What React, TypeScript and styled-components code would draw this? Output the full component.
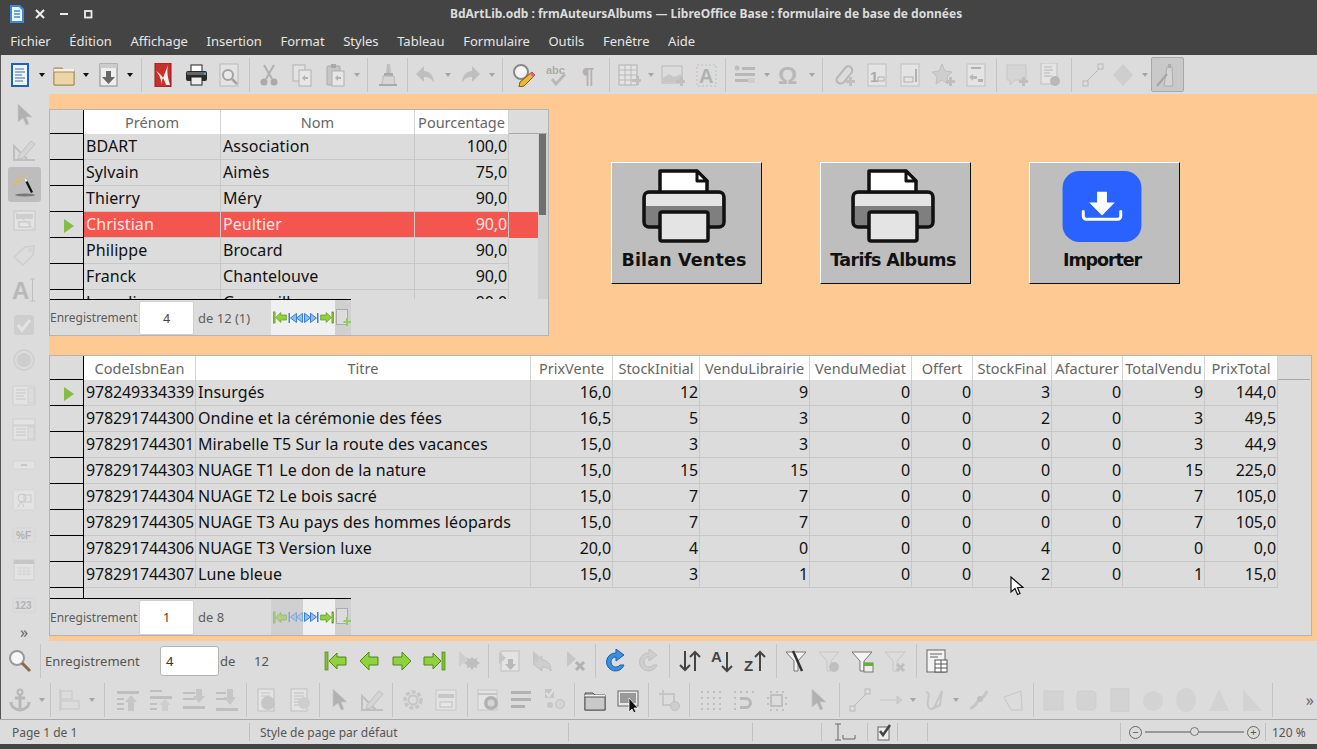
import * as React from 'react';
import styled, { createGlobalStyle } from 'styled-components';

const GlobalStyle = createGlobalStyle`
  html, body { margin: 0; padding: 0; height: 100%; overflow: hidden; }
  body { font-family: "Noto Sans", "Open Sans", sans-serif; background: #444; }
`;

const icons: Record<string, React.ReactNode> = {
  newDoc: <><rect x="3" y="0" width="18" height="24" fill="#1f63b8" /><rect x="5" y="2" width="14" height="20" fill="#eef4fb" /><path d="M7 6h9M7 9h10M7 12h7M7 15h10M7 18h8" stroke="#7f9cc0" strokeWidth="1.5" /></>,
  open: <><path d="M2 5h8l2 2h10v15H2z" fill="#d9b97f" stroke="#a98a55" /><rect x="2" y="6" width="20" height="3" fill="#f6f1e4" /><path d="M2 9h20v13H2z" fill="#ecd6a8" stroke="#a98a55" /></>,
  importDoc: <><rect x="4" y="1" width="17" height="22" fill="#eee" stroke="#888" /><rect x="4" y="1" width="17" height="4" fill="#ccc" /><path d="M10 8h5v6h4l-6.500 7-6.500-7h4z" fill="#666" /></>,
  pdf: <><rect x="4" y="0" width="16" height="24" fill="#c9302c" stroke="#8c1f1c" /><path d="M17 2c-1 6-1 10 2 20H15C13 15 10 11 5 8c4 5 6 9 5 15 1-8 5-14 7-21z" fill="#f4f4f4" /></>,
  print: <><rect x="7" y="2" width="11" height="7" fill="#fff" stroke="#222" /><rect x="2" y="8" width="21" height="10" rx="2" fill="#2b2b2b" /><rect x="3" y="9" width="19" height="3" fill="#666" /><rect x="7" y="14" width="11" height="8" fill="#eee" stroke="#222" /><rect x="20" y="10" width="2" height="2" fill="#35a4e0" /></>,
  preview: <><rect x="3" y="1" width="18" height="22" fill="#eee" stroke="#888" /><circle cx="11" cy="12" r="5" fill="#fff" stroke="#555" strokeWidth="2" /><path d="M15 16l5 5" stroke="#555" strokeWidth="2.500" /></>,
  cut: <><path d="M7 2l8 14M17 2L9 16" stroke="#777" strokeWidth="2" /><circle cx="7" cy="19" r="3.500" fill="#666" /><circle cx="17" cy="19" r="3.500" fill="#666" /></>,
  copy: <><rect x="3" y="2" width="12" height="16" fill="#eee" stroke="#777" /><rect x="9" y="7" width="12" height="16" fill="#f5f5f5" stroke="#777" /><path d="M12 15l3-3v2h3v2h-3v2z" fill="#777" /></>,
  paste: <><rect x="4" y="3" width="13" height="19" rx="1" fill="#aaa" stroke="#666" /><rect x="8" y="1" width="5" height="4" fill="#666" /><rect x="9" y="8" width="12" height="15" fill="#f5f5f5" stroke="#777" /><path d="M12 15l3-3v2h3v2h-3v2z" fill="#777" /></>,
  clone: <><path d="M11 1h3l1 10h-5z" fill="#999" /><rect x="8" y="10" width="9" height="3" fill="#666" /><path d="M7 13h11l1 9H5c2-3 2-6 2-9z" fill="#ccc" stroke="#888" /><path d="M3 21h18v2H3z" fill="#666" /></>,
  undo: <path d="M10 3L2 11l8 8v-5c5 0 8 2 10 6 0-7-4-12-10-12z" fill="#999" />,
  redo: <path d="M14 3l8 8-8 8v-5c-5 0-8 2-10 6 0-7 4-12 10-12z" fill="#999" />,
  find: <><circle cx="9" cy="9" r="7" fill="#f4f4f4" stroke="#888" strokeWidth="2" /><path d="M20 9l3 3-11 11-5 1 1-5z" fill="#f1b633" stroke="#7a5a16" /><path d="M20 9l3 3-2 2-3-3z" fill="#e85c8a" /></>,
  spell: <><text x="1" y="11" fontFamily="Liberation Sans" fontWeight="700" fontSize="11" fill="#666">abc</text><path d="M7 16l4 5 9-10" stroke="#888" strokeWidth="3" fill="none" /></>,
  para: <text x="4" y="20" fontFamily="Liberation Sans" fontWeight="700" fontSize="22" fill="#777">¶</text>,
  table: <><rect x="2" y="2" width="18" height="20" fill="#eee" stroke="#777" /><path d="M2 7h18M2 12h18M2 17h18M8 2v20M14 2v20" stroke="#888" /><path d="M15 16h4v-3h3v3h2v3h-2v3h-3v-3h-4z" fill="#999" /></>,
  image: <><rect x="1" y="3" width="20" height="17" fill="#ddd" stroke="#888" /><path d="M2 15l6-4 5 3 7-3v8H2z" fill="#aaa" /><path d="M15 17h4v-3h3v3h2v3h-2v3h-3v-3h-4z" fill="#999" /></>,
  textbox: <><rect x="3" y="2" width="19" height="21" fill="none" stroke="#999" strokeDasharray="2 2" /><text x="5" y="20" fontFamily="Liberation Sans" fontWeight="700" fontSize="20" fill="#777">A</text></>,
  lists: <><circle cx="4" cy="5" r="2.500" fill="#999" /><path d="M9 4h13v3H9zM2 10h20v3H2zM2 16h14v3H2z" fill="#888" /><rect x="15" y="15" width="7" height="5" fill="#bbb" /></>,
  omega: <text x="0" y="21" fontFamily="Liberation Sans" fontWeight="700" fontSize="24" fill="#888">Ω</text>,
  link: <><path d="M5 15l9-11c4-2 7 1 6 5l-8 10c-3 3-9 1-7-4z" fill="none" stroke="#888" strokeWidth="2" /><path d="M14 17h3v-3h3v3h3v3h-3v3h-3v-3h-3z" fill="#999" /></>,
  footnote: <><rect x="3" y="1" width="18" height="22" fill="#f0f0f0" stroke="#999" /><text x="5" y="19" fontFamily="Liberation Sans" fontWeight="700" fontSize="15" fill="#666">1</text><rect x="13" y="14" width="6" height="4" fill="none" stroke="#777" /></>,
  header: <><rect x="3" y="1" width="18" height="22" fill="#f0f0f0" stroke="#999" /><rect x="6" y="14" width="9" height="5" fill="none" stroke="#777" /><path d="M18 6v13" stroke="#777" strokeWidth="2" /></>,
  star: <><path d="M11 1l3 7 7 1-5 5 1 7-6-4-6 4 1-7-5-5 7-1z" fill="#bbb" stroke="#999" /><path d="M15 17h3v-3h3v3h3v3h-3v3h-3v-3h-3z" fill="#999" /></>,
  xref: <><rect x="3" y="1" width="18" height="22" fill="#f0f0f0" stroke="#999" /><path d="M7 5h10" stroke="#777" strokeWidth="2" /><path d="M5 14l4-3v2h4v3H9v2z" fill="#888" /><rect x="14" y="16" width="5" height="3" fill="#777" /></>,
  comment: <><path d="M2 2h19v15H10l-5 5v-5H2z" fill="#ccc" stroke="#aaa" /><path d="M14 17h3v-3h3v3h3v3h-3v3h-3v-3h-3z" fill="#999" /></>,
  track: <><rect x="3" y="0" width="16" height="21" fill="#f0f0f0" stroke="#999" /><path d="M6 4h8M6 7h9M6 10h6M6 13h8" stroke="#888" /><circle cx="17" cy="18" r="5" fill="#888" /></>,
  line: <><rect x="2" y="18" width="5" height="5" fill="#ddd" stroke="#888" /><rect x="17" y="1" width="5" height="5" fill="#ddd" stroke="#888" /><path d="M6 18L18 6" stroke="#888" /></>,
  diamond: <path d="M12 1l10 11-10 11L2 12z" fill="#bbb" />,
  drawFn: <><path d="M12 4h5l1 19H9z" fill="#e4e4e4" stroke="#888" /><rect x="13" y="1" width="3" height="4" fill="#888" /><path d="M2 23L12 11" stroke="#777" strokeWidth="2" /></>,
  search: <><circle cx="9" cy="9" r="7" fill="#f6f6f6" stroke="#999" strokeWidth="2" /><path d="M14 14l8 8" stroke="#8a6a4a" strokeWidth="3" /></>,
  first: <><rect x="2" y="3" width="3" height="18" fill="#7fc135" stroke="#4f8a12" strokeWidth=".7" /><path d="M6 12l8-8v4h9v8h-9v4z" fill="#8fd13f" stroke="#4f8a12" /></>,
  prev: <path d="M3 12l9-9v5h9v8h-9v5z" fill="#8fd13f" stroke="#4f8a12" />,
  next: <path d="M21 12l-9-9v5H3v8h9v5z" fill="#8fd13f" stroke="#4f8a12" />,
  last: <><rect x="19" y="3" width="3" height="18" fill="#7fc135" stroke="#4f8a12" strokeWidth=".7" /><path d="M18 12l-8-8v4H1v8h9v4z" fill="#8fd13f" stroke="#4f8a12" /></>,
  newRec: <><path d="M3 2l9 8-9 8z" fill="#bbb" /><path d="M16 8l2 2 3-1 0 3 3 2-3 2 0 3-3-1-2 3-2-3-3 1 0-3-3-2 3-2 0-3 3 1z" fill="#999" /></>,
  saveRec: <><rect x="4" y="2" width="18" height="20" fill="#eee" stroke="#999" /><path d="M2 3l7 6-7 6z" fill="#aaa" /><path d="M11 10h5v5h3l-5.500 6-5.500-6h3z" fill="#888" /></>,
  undoRec: <><path d="M3 2l7 6-7 6z" fill="#aaa" /><path d="M12 7l-9 8 9 7v-4c4 0 7 1 9 4 0-7-4-11-9-11z" fill="#bbb" stroke="#999" /></>,
  delRec: <><path d="M4 2l9 8-9 8z" fill="#aaa" /><path d="M13 13l8 8M21 13l-8 8" stroke="#777" strokeWidth="3" /></>,
  refresh: <><path d="M12 4a9 9 0 1 0 8 12h-4a5 5 0 1 1-4-8v4l8-6-8-6z" fill="#3d8de0" stroke="#1d5ea8" /></>,
  refreshOff: <path d="M12 4a9 9 0 1 0 8 12h-4a5 5 0 1 1-4-8v4l8-6-8-6z" fill="#bbb" stroke="#999" />,
  sort: <path d="M7 2v19M2 16l5 5 5-5M17 22V3M12 8l5-5 5 5" stroke="#444" strokeWidth="2" fill="none" />,
  sortAz: <><text x="0" y="13" fontFamily="Liberation Sans" fontWeight="700" fontSize="15" fill="#444">A</text><path d="M16 3v19M11 17l5 5 5-5" stroke="#444" strokeWidth="2" fill="none" /></>,
  sortZa: <><text x="0" y="22" fontFamily="Liberation Sans" fontWeight="700" fontSize="15" fill="#444">Z</text><path d="M16 22V3M11 8l5-5 5 5" stroke="#444" strokeWidth="2" fill="none" /></>,
  autoFilter: <><path d="M2 3h20l-8 9v10h-4V12z" fill="#f2f2f2" stroke="#777" /><path d="M9 2l9 20" stroke="#333" strokeWidth="2.500" /></>,
  filterOk: <><path d="M2 3h20l-8 9v10h-4V12z" fill="#ddd" stroke="#aaa" /><circle cx="17" cy="18" r="5" fill="#999" /></>,
  filterStd: <><path d="M2 3h20l-8 9v10h-4V12z" fill="#f4f4f4" stroke="#777" /><rect x="14" y="14" width="9" height="9" fill="#eee" stroke="#777" /><rect x="14" y="14" width="9" height="3" fill="#5cb531" /></>,
  filterOff: <><path d="M2 3h20l-8 9v10h-4V12z" fill="#ddd" stroke="#aaa" /><path d="M14 15l7 7M21 15l-7 7" stroke="#999" strokeWidth="3" /></>,
  dataTable: <><rect x="2" y="1" width="18" height="22" fill="#f2f2f2" stroke="#666" /><path d="M5 5h12M5 8h8" stroke="#aaa" strokeWidth="2" /><rect x="10" y="11" width="12" height="12" fill="#fff" stroke="#555" /><path d="M10 15h12M10 19h12M16 11v12" stroke="#555" /></>,
  anchor: <><circle cx="12" cy="4" r="2.500" fill="none" stroke="#888" strokeWidth="2" /><path d="M12 6v16M7 10h10M3 14c0 5 5 8 9 8s9-3 9-8" stroke="#888" strokeWidth="3" fill="none" /></>,
  align: <><path d="M2 1v22" stroke="#aaa" /><rect x="3" y="3" width="11" height="8" fill="#ddd" stroke="#aaa" /><rect x="3" y="13" width="18" height="8" fill="#ddd" stroke="#aaa" /></>,
  front: <><path d="M1 3h22v3H1zM1 10h7v2H1zM1 15h7v2H1zM1 20h7v2H1z" fill="#999" /><path d="M15 7l6 7h-3v9h-6v-9H9z" fill="#aaa" /></>,
  forward: <><path d="M1 2h12v2H1zM1 8h22v3H1zM1 15h7v2H1zM1 20h7v2H1z" fill="#999" /><path d="M16 11l6 6h-3v6h-6v-6h-3z" fill="#bbb" /></>,
  backward: <><path d="M1 4h12v2H1zM1 10h12v2H1zM1 18h22v3H1z" fill="#999" /><path d="M16 1v7h3l-6 7-6-7h3V1z" transform="translate(4 0)" fill="#aaa" /></>,
  back: <><path d="M1 4h10v2H1zM1 10h10v2H1zM1 20h22v3H1z" fill="#999" /><path d="M12 1h6v8h3l-6 8-6-8h3z" fill="#aaa" /></>,
  inFront: <><rect x="4" y="1" width="16" height="22" fill="#eee" stroke="#999" /><path d="M7 5h9M7 8h9" stroke="#aaa" /><circle cx="14" cy="15" r="7" fill="#aaa" /></>,
  inBack: <><rect x="4" y="1" width="16" height="22" fill="#eee" stroke="#999" /><path d="M7 5h10M7 8h10M7 11h10M7 14h10M7 17h10" stroke="#999" /><circle cx="17" cy="15" r="6" fill="#bbb" /></>,
  pointer: <path d="M6 1v18l5-4 3 7 3-1-3-7h6z" fill="#777" stroke="#aaa" strokeWidth=".7" />,
  design: <><path d="M2 22V8l14 14z" fill="none" stroke="#999" strokeWidth="2" /><path d="M2 22h21" stroke="#999" strokeWidth="2" /><path d="M7 17L19 3l4 3-12 14-5 1z" fill="#ccc" stroke="#999" /></>,
  gear: <><circle cx="12" cy="12" r="8" fill="none" stroke="#aaa" strokeWidth="3.500" strokeDasharray="4 2" /><circle cx="12" cy="12" r="4.500" fill="none" stroke="#aaa" strokeWidth="2" /></>,
  control: <><rect x="2" y="2" width="20" height="20" fill="#eee" stroke="#aaa" /><rect x="4" y="6" width="16" height="4" fill="#aaa" /><rect x="6" y="14" width="12" height="5" fill="#f6f6f6" stroke="#999" /></>,
  sqlView: <><rect x="2" y="2" width="19" height="20" fill="#eee" stroke="#aaa" /><path d="M2 6h19" stroke="#aaa" strokeWidth="2" /><circle cx="15" cy="15" r="7" fill="#777" /><circle cx="15" cy="15" r="3.500" fill="#ccc" /></>,
  tabOrder: <path d="M2 3h20v3H2zM2 10h20v3H2zM2 17h14v3H2z" fill="#777" />,
  formCheck: <><rect x="3" y="1" width="9" height="9" fill="#aaa" /><path d="M4 5l3 3 5-7" stroke="#eee" strokeWidth="2" fill="none" /><circle cx="8" cy="17" r="3" fill="#aaa" /><circle cx="18" cy="16" r="4.500" fill="#ccc" stroke="#999" /></>,
  folder: <><path d="M2 5h8l2 2h10v15H2z" fill="#aaa" stroke="#555" /><rect x="2" y="7" width="20" height="2" fill="#f0f0f0" /><rect x="2" y="9" width="20" height="13" fill="#c9c9c9" stroke="#555" /></>,
  formWin: <><rect x="2" y="3" width="20" height="15" fill="#e8e8e8" stroke="#666" /><rect x="4" y="5" width="16" height="10" fill="#999" /><path d="M13 10v14l3-3 2 4 2-1-2-4h4z" fill="#111" stroke="#fff" strokeWidth=".7" /></>,
  crop: <><path d="M2 6h15v14" fill="none" stroke="#aaa" strokeWidth="2" /><path d="M6 2v15h12" fill="none" stroke="#aaa" strokeWidth="2" /><circle cx="18" cy="18" r="4.500" fill="#bbb" stroke="#999" /></>,
  gridDots: <path d="M3 3h2v2H3zM9 3h2v2H9zM15 3h2v2h-2zM21 3h2v2h-2zM3 9h2v2H3zM9 9h2v2H9zM15 9h2v2h-2zM21 9h2v2h-2zM3 15h2v2H3zM9 15h2v2H9zM15 15h2v2h-2zM21 15h2v2h-2zM3 20h2v2H3zM9 20h2v2H9zM15 20h2v2h-2zM21 20h2v2h-2z" fill="#999" />,
  snapMag: <><path d="M3 3h2v2H3zM9 3h2v2H9zM15 3h2v2h-2zM21 3h2v2h-2zM3 9h2v2H3zM3 15h2v2H3zM3 20h2v2H3z" fill="#999" /><path d="M9 9h6a6 6 0 0 1 0 12H9v-3h6a3 3 0 0 0 0-6H9z" fill="#888" /></>,
  snapObj: <><path d="M6 3h2v2H6zM12 3h2v2h-2zM18 3h2v2h-2zM3 9h2v2H3zM21 9h2v2h-2zM3 15h2v2H3zM21 15h2v2h-2zM6 21h2v2H6zM12 21h2v2h-2zM18 21h2v2h-2z" fill="#999" /><rect x="7" y="7" width="11" height="11" fill="none" stroke="#999" strokeWidth="2" /></>,
  arrowLine: <path d="M1 12h17M18 8l5 4-5 4z" stroke="#aaa" fill="#bbb" />,
  curve: <><path d="M4 4c6 1 0 9 2 14 2 5 6 3 8-2l6-13-2 14-8 4" stroke="#aaa" strokeWidth="2" fill="#e4e4e4" /></>,
  connector: <><path d="M2 20c6 0 7-8 10-9 4-1 5-4 7-8" stroke="#aaa" strokeWidth="3" fill="none" /><circle cx="12" cy="11" r="3" fill="#999" /></>,
  polygon: <path d="M3 9l17-6 1 19H10z" fill="none" stroke="#aaa" />,
  rect: <rect x="2" y="3" width="19" height="19" fill="#c8c8c8" stroke="#bbb" />,
  rounded: <rect x="2" y="3" width="19" height="19" rx="4" fill="#c8c8c8" stroke="#bbb" />,
  tallRect: <rect x="3" y="0" width="18" height="24" fill="#c8c8c8" stroke="#bbb" />,
  circle: <circle cx="12" cy="13" r="10" fill="#c8c8c8" />,
  ellipse: <ellipse cx="12" cy="12" rx="10" ry="12" fill="#c8c8c8" />,
  triangle: <path d="M12 1l10 22H2z" fill="#c8c8c8" />,
  rightTri: <path d="M3 1l19 22H3z" fill="#c8c8c8" />,
  formDlg: <><rect x="2" y="3" width="21" height="19" fill="#eee" stroke="#aaa" /><rect x="4" y="6" width="17" height="5" fill="#bbb" /><rect x="7" y="14" width="11" height="5" fill="#f6f6f6" stroke="#999" /><path d="M2 3l21 19" stroke="#bbb" /></>,
  wand: <><ellipse cx="13" cy="22" rx="10" ry="1.500" fill="#777" /><path d="M12 6l2-1 7 14-2 1z" fill="#111" /><path d="M12 6l2-1 1.500 3-2 1z" fill="#fff" /><path d="M3 8h2v2H3zM6 4h2v2H6zM9 2h2v2H9zM5 8h2v2H5zM2 11h2v2H2zM8 7h2v2H8z" fill="#e8b84a" /></>,
  tag: <><path d="M2 14L13 4l9-1-1 9-10 10z" fill="none" stroke="#bbb" strokeWidth="1.500" /><circle cx="18" cy="7" r="1.500" fill="none" stroke="#bbb" /></>,
  textField: <><text x="0" y="21" fontFamily="Liberation Sans" fontWeight="700" fontSize="24" fill="#888">A</text><path d="M18 1h5M20.500 1v22M18 23h5" stroke="#999" /></>,
  check: <><rect x="2" y="2" width="20" height="20" rx="3" fill="#bbb" /><path d="M6 12l4 5 8-10" stroke="#eee" strokeWidth="3" fill="none" /></>,
  radio: <><circle cx="12" cy="12" r="10" fill="none" stroke="#bbb" strokeWidth="1.500" /><circle cx="12" cy="12" r="7" fill="#bbb" /></>,
  listBox: <><rect x="1" y="3" width="22" height="19" rx="1" fill="#eee" stroke="#bbb" /><path d="M4 7h10M4 10h10M4 13h8M4 16h10" stroke="#aaa" /><rect x="16" y="5" width="6" height="15" fill="#ddd" stroke="#bbb" /></>,
  comboBox: <><rect x="1" y="1" width="22" height="6" fill="#eee" stroke="#bbb" /><rect x="1" y="8" width="22" height="14" fill="#eee" stroke="#bbb" /><path d="M4 11h10M4 14h10M4 17h10" stroke="#aaa" /><rect x="16" y="9" width="6" height="12" fill="#ddd" stroke="#bbb" /></>,
  okBtn: <><rect x="1" y="8" width="22" height="8" fill="#eee" stroke="#ccc" /><path d="M9 12h6" stroke="#aaa" strokeWidth="2" /></>,
  imgBtn: <><rect x="1" y="2" width="22" height="20" rx="2" fill="#eee" stroke="#ccc" /><circle cx="10" cy="10" r="4" fill="none" stroke="#aaa" /><path d="M6 19l3-6 3 6" fill="none" stroke="#aaa" /><rect x="12" y="7" width="7" height="7" fill="none" stroke="#aaa" /></>,
  fmtField: <><rect x="1" y="5" width="22" height="14" fill="#ddd" stroke="#ccc" /><text x="4" y="16" fontFamily="Liberation Sans" fontWeight="700" fontSize="10" fill="#777">%F</text></>,
  dateField: <><rect x="2" y="2" width="20" height="20" fill="#eee" stroke="#bbb" /><rect x="2" y="2" width="20" height="4" fill="#aaa" /><path d="M5 10h14M5 13h14M5 16h14M8 9v9M12 9v9M16 9v9" stroke="#ccc" /></>,
  numField: <><rect x="1" y="5" width="22" height="14" fill="#ddd" stroke="#ccc" /><text x="3" y="16" fontFamily="Liberation Sans" fontWeight="700" fontSize="10" fill="#777">123</text></>,
};

const brightIcons = new Set([
  'newDoc', 'open', 'importDoc', 'pdf', 'print', 'find', 'search', 'first', 'prev', 'next', 'last', 'refresh',
  'sort', 'sortAz', 'sortZa', 'autoFilter', 'filterStd', 'dataTable', 'folder', 'formWin', 'wand',
]);

const mainBar = [
  'newDoc', '>', 'open', '>', 'importDoc', '>', '|11', 'pdf', 'print', 'preview', '|7', 'cut', 'copy', 'paste', '>', '|9', 'clone', '|5',
  'undo', '>', 'redo', '>', '|10', 'find', 'spell', 'para', '|6', 'table', '>', 'image', 'textbox', '|6', 'lists', '>', '_1', 'omega', '>', '|10',
  'link', 'footnote', 'header', 'star', 'xref', '|8', 'comment', 'track', '|10', 'line', '_-3', 'diamond', '>', '*drawFn',
];
const navBarA = ['first', '_1', 'prev', 'next', 'last', 'newRec', '|8', 'saveRec', 'undoRec', 'delRec', '|8', 'refresh', 'refreshOff', '|8', 'sort', 'sortAz', 'sortZa', '|7', 'autoFilter', 'filterOk', 'filterStd', 'filterOff', '|9', 'dataTable'];
const drawBar = [
  'anchor', '>', '|6', 'align', '>', '|14', 'front', 'forward', 'backward', 'back', '|6', 'inFront', 'inBack', '|7', 'pointer', 'design', '|8', 'gear', 'control', '|9',
  'sqlView', 'tabOrder', 'formCheck', '|8', 'folder', 'formWin', '|8', 'crop', '|8', 'gridDots', 'snapMag', 'snapObj', '_9', 'pointer', '|9', 'line', '_-2', 'arrowLine', '>', '_-1', 'curve', '>', '_2', 'connector', 'polygon', '|8',
  'rect', 'rounded', 'tallRect', 'circle', 'ellipse', 'triangle', 'rightTri', '|8',
];
const sideBar = ['pointer', 'design', '*wand', 'formDlg', 'tag', 'textField', 'check', 'radio', 'listBox', 'comboBox', 'okBtn', 'imgBtn', 'fmtField', 'dateField', 'numField'];
const menus = ['Fichier', 'Édition', 'Affichage', 'Insertion', 'Format', 'Styles', 'Tableau', 'Formulaire', 'Outils', 'Fenêtre', 'Aide'];

const authors = [
  ['BDART', 'Association', '100,0'],
  ['Sylvain', 'Aimès', '75,0'],
  ['Thierry', 'Méry', '90,0'],
  ['Christian', 'Peultier', '90,0'],
  ['Philippe', 'Brocard', '90,0'],
  ['Franck', 'Chantelouve', '90,0'],
  ['Leandi', 'Goureville', '90,0'],
];
const albums = [
  ['978249334339', 'Insurgés', '16,0', '12', '9', '0', '0', '3', '0', '9', '144,0'],
  ['978291744300', 'Ondine et la cérémonie des fées', '16,5', '5', '3', '0', '0', '2', '0', '3', '49,5'],
  ['978291744301', 'Mirabelle T5 Sur la route des vacances', '15,0', '3', '3', '0', '0', '0', '0', '3', '44,9'],
  ['978291744303', 'NUAGE T1 Le don de la nature', '15,0', '15', '15', '0', '0', '0', '0', '15', '225,0'],
  ['978291744304', 'NUAGE T2 Le bois sacré', '15,0', '7', '7', '0', '0', '0', '0', '7', '105,0'],
  ['978291744305', 'NUAGE T3 Au pays des hommes léopards', '15,0', '7', '7', '0', '0', '0', '0', '7', '105,0'],
  ['978291744306', 'NUAGE T3 Version luxe', '20,0', '4', '0', '0', '0', '4', '0', '0', '0,0'],
  ['978291744307', 'Lune bleue', '15,0', '3', '1', '0', '0', '2', '0', '1', '15,0'],
];
const authorCols: Col[] = [
  { name: 'Prénom', w: 137 }, { name: 'Nom', w: 194 }, { name: 'Pourcentage', w: 94, right: true },
];
const albumCols: Col[] = [
  { name: 'CodeIsbnEan', w: 112, digits: true }, { name: 'Titre', w: 335 }, { name: 'PrixVente', w: 82, right: true },
  { name: 'StockInitial', w: 87, right: true }, { name: 'VenduLibrairie', w: 110, right: true }, { name: 'VenduMediat', w: 102, right: true },
  { name: 'Offert', w: 61, right: true }, { name: 'StockFinal', w: 79, right: true }, { name: 'Afacturer', w: 71, right: true },
  { name: 'TotalVendu', w: 82, right: true }, { name: 'PrixTotal', w: 73, right: true },
];

type Col = { name: string; w: number; right?: boolean; digits?: boolean };

function Glyph({ name, size = 24 }: { name: string; size?: number }) {
  return <svg width={size} height={size} viewBox="0 0 24 24">{icons[name]}</svg>;
}

function ToolItems({ items }: { items: string[] }) {
  return (
    <>
      {items.map((it, i) => {
        if (it === '>') return <DropArrow key={i} $dark={brightIcons.has(items[i - 1])} />;
        if (it[0] === '|') return <Sep key={i} $w={Number(it.slice(1))} />;
        if (it[0] === '_') return <Spacer key={i} $w={Number(it.slice(1))} />;
        const active = it[0] === '*';
        const name = active ? it.slice(1) : it;
        return (
          <ToolBtn key={i} $active={active} $dim={!brightIcons.has(name)}>
            <Glyph name={name} />
          </ToolBtn>
        );
      })}
    </>
  );
}

function BlueSkip({ back }: { back?: boolean }) {
  return (
    <SkipIcon $back={back} width="15" height="10" viewBox="0 0 15 10">
      <path d="M0.500 .500l6 4.500-6 4.500zM6.500 .500l6 4.500-6 4.500z" fill="#8dbcf0" stroke="#3b7ed8" />
      <rect x="13" y="0" width="1.500" height="10" fill="#3b7ed8" />
    </SkipIcon>
  );
}

function RecordBar({ value, total, off }: { value: string; total: string; off?: boolean }) {
  return (
    <RecBar>
      <RecLabel>Enregistrement</RecLabel>
      <RecInput>{value}</RecInput>
      <RecTotal>{total}</RecTotal>
      <RecBtn $off={off}><Glyph name="first" size={15} /></RecBtn>
      <RecBtn $off={off}><BlueSkip back /></RecBtn>
      <RecBtn><BlueSkip /></RecBtn>
      <RecBtn><Glyph name="last" size={15} /></RecBtn>
      <RecNew>
        <svg width="16" height="22" viewBox="0 0 16 22">
          <rect x="1.500" y="2.500" width="11" height="15" fill="#dcdcdc" stroke="#aaa" />
          <path d="M9 14h2v-3h2v3h3v2h-3v3h-2v-3H8z" fill="#8fce5a" />
        </svg>
      </RecNew>
    </RecBar>
  );
}

function DataRows({ cols, rows, selected, current }: { cols: Col[]; rows: string[][]; selected?: number; current: number }) {
  return (
    <RowsPane>
      {rows.map((row, r) => (
        <GridRow key={r} $selected={selected === r}>
          <Handle>{current === r && <Marker />}</Handle>
          {cols.map((c, i) => (
            <Cell key={c.name} $w={c.w} $right={c.right} $digits={c.right || c.digits}>{row[i]}</Cell>
          ))}
        </GridRow>
      ))}
    </RowsPane>
  );
}

function GridHeader({ cols }: { cols: Col[] }) {
  return (
    <HeaderRow>
      <HeaderHandle />
      {cols.map((c) => <HeaderCell key={c.name} $w={c.w}>{c.name}</HeaderCell>)}
      <HeaderRest />
    </HeaderRow>
  );
}

function FormButton({ label, kind, spacing }: { label: string; kind: 'print' | 'import'; spacing: number }) {
  return (
    <BigButton>
      <BigPicture>
        {kind === 'print' ? (
          <svg width="84" height="74" viewBox="0 0 84 74">
            <path d="M18 2h37l10 10v17H18z" fill="#fff" stroke="#111" strokeWidth="3.500" strokeLinejoin="round" />
            <path d="M55 2v10h10z" fill="#fff" stroke="#111" strokeWidth="3" strokeLinejoin="round" />
            <rect x="2" y="23" width="80" height="35" rx="5" fill="#7f7f7f" stroke="#111" strokeWidth="3.500" />
            <path d="M4 28a3 3 0 0 1 3-3h70a3 3 0 0 1 3 3v9H4z" fill="#e4e4e4" />
            <rect x="18" y="43" width="48" height="29" rx="2" fill="#e4e4e4" stroke="#111" strokeWidth="3.500" />
          </svg>
        ) : (
          <svg width="80" height="71" viewBox="0 0 80 72">
            <rect width="80" height="72" rx="17" fill="#2962ff" />
            <path d="M35 21h10v11h8L40 45 27 32h8z" fill="#fff" />
            <path d="M21 41v5a3 3 0 0 0 3 3h32a3 3 0 0 0 3-3v-5" fill="none" stroke="#fff" strokeWidth="3" strokeLinecap="round" />
          </svg>
        )}
      </BigPicture>
      <BigLabel $spacing={spacing}>{label}</BigLabel>
    </BigButton>
  );
}

export default function App() {
  return (
    <Page>
      <GlobalStyle />
      <TitleBar>
        <svg width="18" height="18" viewBox="0 0 18 18">
          <path d="M2 0h10l4 4v14H2z" fill="#3c8ad8" />
          <path d="M4 2h7l3 3v11H4z" fill="#eef6fd" />
          <path d="M6 6h6M6 9h6M6 12h6" stroke="#3c8ad8" strokeWidth="1.500" />
        </svg>
        <WinBtn $first>
          <svg width="10" height="10" viewBox="0 0 10 10"><path d="M1 1l8 8M9 1l-8 8" stroke="#eee" strokeWidth="2" /></svg>
        </WinBtn>
        <WinBtn>
          <svg width="10" height="10" viewBox="0 0 10 10"><path d="M1 5h8" stroke="#eee" strokeWidth="2" /></svg>
        </WinBtn>
        <WinBtn>
          <svg width="10" height="10" viewBox="0 0 10 10"><rect x="2" y="2" width="6.500" height="6.500" fill="none" stroke="#eee" strokeWidth="1.800" /></svg>
        </WinBtn>
        <Title>BdArtLib.odb : frmAuteursAlbums — LibreOffice Base : formulaire de base de données</Title>
      </TitleBar>
      <MenuBar>
        {menus.map((m) => <MenuItem key={m}>{m}</MenuItem>)}
      </MenuBar>
      <Toolbar>
        <ToolItems items={mainBar} />
      </Toolbar>
      <Main>
        <SideBar>
          {sideBar.map((s) => {
            const active = s[0] === '*';
            const name = active ? s.slice(1) : s;
            return (
              <SideBtn key={s} $active={active} $dim={!brightIcons.has(name)}>
                <Glyph name={name} />
              </SideBtn>
            );
          })}
          <SideMore>»</SideMore>
        </SideBar>
        <Canvas>
          <TopRow>
            <GridBox $w={500} $h={227}>
              <GridHeader cols={authorCols} />
              <GridBody $h={165}>
                <DataRows cols={authorCols} rows={authors} selected={3} current={3} />
                <ScrollTrack><ScrollThumb /></ScrollTrack>
              </GridBody>
              <RecordBar value="4" total="de 12 (1)" />
            </GridBox>
            <Buttons>
              <FormButton label="Bilan Ventes" kind="print" spacing={0.15} />
              <FormButton label="Tarifs Albums" kind="print" spacing={-0.6} />
              <FormButton label="Importer" kind="import" spacing={-1.1} />
            </Buttons>
          </TopRow>
          <GridBox $h={281}>
            <GridHeader cols={albumCols} />
            <GridBody $h={208}>
              <DataRows cols={albumCols} rows={albums} current={0} />
            </GridBody>
            <BlankHandle />
            <RecordBar value="1" total="de 8" off />
          </GridBox>
        </Canvas>
      </Main>
      <Toolbar>
        <ToolBtn $dim={false}><Glyph name="search" /></ToolBtn>
        <Sep $w={7} />
        <NavLabel>Enregistrement</NavLabel>
        <NavInput>4</NavInput>
        <NavOf>de</NavOf>
        <NavCount>12</NavCount>
        <ToolItems items={navBarA} />
      </Toolbar>
      <Toolbar>
        <ToolItems items={drawBar} />
        <MoreTools>»</MoreTools>
      </Toolbar>
      <StatusBar>
        <StatusCell $w={250} $pad={12}>Page 1 de 1</StatusCell>
        <StatusCell $w={319} $pad={10}>Style de page par défaut</StatusCell>
        <StatusCell $w={184} />
        <StatusCell $w={69} />
        <StatusCell $w={46} $pad={12}>
          <svg width="24" height="18" viewBox="0 0 24 18">
            <path d="M1 1h6M4 1v16M1 17h6M9 12v4h12v-4" fill="none" stroke="#666" />
          </svg>
        </StatusCell>
        <StatusCell $w={30} $pad={9}>
          <svg width="16" height="18" viewBox="0 0 16 18">
            <rect x="1" y="4" width="11" height="13" fill="#eee" stroke="#666" />
            <path d="M3 8l3 4 7-10" fill="none" stroke="#444" strokeWidth="2.500" />
          </svg>
        </StatusCell>
        <StatusCell $w={30} />
        <StatusCell $w={193} />
        <StatusCell $w={145} $pad={8}>
          <ZoomRound>−</ZoomRound>
          <ZoomTrack><ZoomKnob /></ZoomTrack>
          <ZoomRound>+</ZoomRound>
        </StatusCell>
        <ZoomValue>120 %</ZoomValue>
      </StatusBar>
      <Cursor viewBox="0 0 14 20" width="14" height="20">
        <path d="M1 1v15l4-3.500 2.500 6 2.500-1-2.500-6H13z" fill="#fff" stroke="#111" strokeWidth="1.200" />
      </Cursor>
    </Page>
  );
}

const Page = styled.div`
  position: relative;
  display: flex;
  flex-direction: column;
  width: 1317px;
  height: 749px;
  overflow: hidden;
  background: #444;
`;

const TitleBar = styled.div`
  display: flex;
  align-items: center;
  height: 27px;
  padding-left: 8px;
  background: #444;
  flex: none;
`;

const WinBtn = styled.div<{ $first?: boolean }>`
  display: flex;
  width: 10px;
  justify-content: center;
  margin-left: ${(p) => (p.$first ? 9 : 14)}px;
`;

const Title = styled.div`
  margin-left: 357px;
  color: #dcdcdc;
  font-size: 12px;
  font-weight: 700;
  white-space: nowrap;
`;

const MenuBar = styled.div`
  display: flex;
  align-items: center;
  height: 28px;
  padding-left: 1px;
  background: #444;
  flex: none;
`;

const MenuItem = styled.div`
  padding: 0 9.3px;
  color: #e6e6e6;
  font-size: 13px;
`;

const Toolbar = styled.div`
  display: flex;
  align-items: center;
  height: 39px;
  padding-left: 2.5px;
  background: #dcdcdc;
  flex: none;
  border-left: 1px solid #555;
  box-sizing: content-box;
`;

const ToolBtn = styled.div<{ $active?: boolean; $dim?: boolean }>`
  display: flex;
  align-items: center;
  justify-content: center;
  width: 33px;
  height: 35px;
  box-sizing: border-box;
  flex: none;
  border-radius: 2px;
  background: ${(p) => (p.$active ? '#c9c9c9' : 'transparent')};
  border: 1px solid ${(p) => (p.$active ? '#a8a8a8' : 'transparent')};
  & > svg { opacity: ${(p) => (p.$dim ? 0.42 : 1)}; }
`;

const DropArrow = styled.div<{ $dark?: boolean }>`
  width: 11px;
  height: 6px;
  flex: none;
  &::after {
    content: '';
    display: block;
    width: 0;
    margin: 1px auto 0;
    border-left: 3.5px solid transparent;
    border-right: 3.5px solid transparent;
    border-top: 4px solid ${(p) => (p.$dark ? '#111' : '#a6a6a6')};
  }
`;

const Sep = styled.div<{ $w: number }>`
  display: flex;
  justify-content: center;
  width: ${(p) => p.$w}px;
  height: 34px;
  flex: none;
  &::after {
    content: '';
    width: 1px;
    background: #c4c4c4;
  }
`;

const Spacer = styled.div<{ $w: number }>`
  margin-left: ${(p) => p.$w}px;
  flex: none;
`;

const Main = styled.div`
  display: flex;
  height: 547px;
  flex: none;
`;

const SideBar = styled.div`
  display: flex;
  flex-direction: column;
  align-items: center;
  width: 49px;
  padding: 3px 2px 0 0;
  box-sizing: border-box;
  background: #dcdcdc;
  border-left: 1px solid #555;
  flex: none;
`;

const SideBtn = styled.div<{ $active?: boolean; $dim?: boolean }>`
  display: flex;
  align-items: center;
  justify-content: center;
  width: 33px;
  height: 35px;
  flex: none;
  border-radius: 3px;
  background: ${(p) => (p.$active ? '#bdbdbd' : 'transparent')};
  & > svg { opacity: ${(p) => (p.$dim ? 0.42 : 1)}; }
`;

const SideMore = styled.div`
  margin-top: 1px;
  color: #666;
  font-size: 16px;
  line-height: 18px;
`;

const Canvas = styled.div`
  display: flex;
  flex-direction: column;
  flex: 1;
  padding: 15px 5px 0 0;
  background: #ffc993;
  box-sizing: border-box;
`;

const TopRow = styled.div`
  display: flex;
  margin-bottom: 19px;
`;

const Buttons = styled.div`
  display: flex;
  gap: 58px;
  margin: 53px 0 0 62px;
`;

const BigButton = styled.div`
  display: flex;
  flex-direction: column;
  align-items: center;
  width: 151px;
  height: 122px;
  padding: 6px 5px 0 0;
  box-sizing: border-box;
  background: #bebebe;
  border-top: 1px solid #fff;
  border-left: 1px solid #fff;
  border-right: 1px solid #111;
  border-bottom: 1px solid #111;
`;

const BigPicture = styled.div`
  display: flex;
  align-items: center;
  height: 74px;
`;

const BigLabel = styled.div<{ $spacing: number }>`
  margin-top: 4px;
  color: #111;
  font-family: "DejaVu Sans", sans-serif;
  font-size: 17.5px;
  font-weight: 700;
  letter-spacing: ${(p) => p.$spacing}px;
  line-height: 26px;
  white-space: nowrap;
`;

const GridBox = styled.div<{ $w?: number; $h: number }>`
  display: flex;
  flex-direction: column;
  width: ${(p) => (p.$w ? `${p.$w}px` : '100%')};
  height: ${(p) => p.$h}px;
  box-sizing: border-box;
  background: #dcdcdc;
  border: 1px solid #b4b4b4;
  flex: none;
`;

const HeaderRow = styled.div`
  display: flex;
  height: 24px;
  flex: none;
`;

const HeaderHandle = styled.div`
  width: 34px;
  box-sizing: border-box;
  border-right: 1px solid #000;
  border-bottom: 1px solid #000;
  flex: none;
`;

const HeaderCell = styled.div<{ $w: number }>`
  width: ${(p) => p.$w}px;
  box-sizing: border-box;
  background: #fff;
  border-right: 1px solid #d4d4d4;
  color: #666;
  font-size: 14.5px;
  line-height: 25px;
  text-align: center;
  white-space: nowrap;
  overflow: hidden;
  flex: none;
`;

const HeaderRest = styled.div`
  flex: 1;
  margin-right: 1px;
  border-bottom: 1px solid #a8a8a8;
`;

const GridBody = styled.div<{ $h: number }>`
  display: flex;
  height: ${(p) => p.$h}px;
  overflow: hidden;
  flex: none;
`;

const RowsPane = styled.div`
  flex: 1;
  overflow: hidden;
`;

const GridRow = styled.div<{ $selected?: boolean }>`
  display: flex;
  height: 26px;
  background: ${(p) => (p.$selected ? '#f5554f' : 'transparent')};
  color: ${(p) => (p.$selected ? '#ffe6e6' : '#111')};
`;

const Handle = styled.div`
  display: flex;
  align-items: center;
  justify-content: flex-end;
  width: 34px;
  padding-right: 9px;
  box-sizing: border-box;
  background: #dcdcdc;
  border-right: 1px solid #000;
  border-bottom: 1px solid #000;
  flex: none;
`;

const Marker = styled.div`
  width: 0;
  border-left: 10px solid #86bb44;
  border-top: 7px solid transparent;
  border-bottom: 7px solid transparent;
  margin-top: 2px;
`;

const Cell = styled.div<{ $w: number; $right?: boolean; $digits?: boolean }>`
  width: ${(p) => p.$w}px;
  box-sizing: border-box;
  padding: 0 1px 0 2px;
  border-right: 1px solid #c8c8c8;
  border-bottom: 1px solid #c8c8c8;
  font-size: 16px;
  letter-spacing: ${(p) => (p.$digits ? -0.15 : 0.08)}px;
  line-height: 25px;
  text-align: ${(p) => (p.$right ? 'right' : 'left')};
  white-space: nowrap;
  overflow: hidden;
  flex: none;
`;

const ScrollTrack = styled.div`
  width: 10px;
  background: #d0d0d0;
  flex: none;
`;

const ScrollThumb = styled.div`
  width: 7px;
  height: 81px;
  margin-left: 1px;
  background: #6f6f6f;
`;

const BlankHandle = styled.div`
  width: 34px;
  height: 10px;
  box-sizing: border-box;
  border-right: 1px solid #000;
  flex: none;
`;

const RecBar = styled.div`
  display: flex;
  align-items: stretch;
  width: 301px;
  flex: 1;
  box-sizing: border-box;
  border-top: 1px solid #000;
`;

const RecLabel = styled.div`
  display: flex;
  align-items: center;
  width: 89px;
  box-sizing: border-box;
  color: #5c5c5c;
  font-size: 12px;
  white-space: nowrap;
`;

const RecInput = styled.div`
  display: flex;
  align-items: center;
  justify-content: center;
  width: 55px;
  margin-top: 1px;
  box-sizing: border-box;
  background: #fff;
  border: 1px solid #d0d0d0;
  border-radius: 2px;
  color: #553c22;
  font-size: 12.5px;
`;

const RecTotal = styled.div`
  display: flex;
  align-items: center;
  width: 77px;
  padding-left: 4px;
  box-sizing: border-box;
  color: #5c5c5c;
  font-size: 13px;
  white-space: nowrap;
`;

const RecBtn = styled.div<{ $off?: boolean }>`
  display: flex;
  align-items: center;
  justify-content: center;
  width: 16px;
  background: ${(p) => (p.$off ? '#d0d0d0' : '#f0f0f0')};
  flex: none;
  & > svg { opacity: ${(p) => (p.$off ? 0.5 : 1)}; }
`;

const SkipIcon = styled.svg<{ $back?: boolean }>`
  transform: ${(p) => (p.$back ? 'scaleX(-1)' : 'none')};
`;

const RecNew = styled.div`
  display: flex;
  align-items: center;
  justify-content: center;
  width: 16px;
  background: #d0d0d0;
  flex: none;
`;

const NavLabel = styled.div`
  width: 115px;
  margin-left: 1.5px;
  color: #555;
  font-size: 13px;
  white-space: nowrap;
`;

const NavInput = styled.div`
  width: 59px;
  height: 30px;
  padding-left: 5px;
  box-sizing: border-box;
  background: #fff;
  border: 1px solid #b4b4b4;
  border-radius: 3px;
  color: #333;
  font-size: 13px;
  line-height: 28px;
  flex: none;
`;

const NavOf = styled.div`
  width: 34px;
  margin-left: 1px;
  color: #555;
  font-size: 13px;
  flex: none;
`;

const NavCount = styled.div`
  width: 64.5px;
  color: #555;
  font-size: 13px;
  flex: none;
`;

const MoreTools = styled.div`
  margin-left: auto;
  margin-right: 3px;
  color: #666;
  font-size: 16px;
`;

const StatusBar = styled.div`
  display: flex;
  align-items: center;
  height: 25px;
  background: #dcdcdc;
  border-top: 1px solid #a8a8a8;
  box-sizing: border-box;
  flex: none;
`;

const StatusCell = styled.div<{ $w: number; $pad?: number }>`
  display: flex;
  align-items: center;
  width: ${(p) => p.$w}px;
  height: 18px;
  padding-left: ${(p) => p.$pad ?? 0}px;
  box-sizing: border-box;
  border-right: 1px solid #c0c0c0;
  color: #555;
  font-size: 12px;
  white-space: nowrap;
  flex: none;
`;

const ZoomRound = styled.div`
  width: 11px;
  height: 11px;
  border: 1px solid #666;
  border-radius: 50%;
  color: #555;
  font-size: 11px;
  line-height: 10px;
  text-align: center;
  flex: none;
`;

const ZoomTrack = styled.div`
  position: relative;
  width: 99px;
  height: 2px;
  margin: 0 3px;
  background: #999;
  flex: none;
`;

const ZoomKnob = styled.div`
  position: absolute;
  left: 45px;
  top: -4px;
  width: 9px;
  height: 9px;
  box-sizing: border-box;
  background: #dcdcdc;
  border: 1px solid #777;
  border-radius: 50%;
`;

const ZoomValue = styled.div`
  margin-left: 6px;
  color: #555;
  font-size: 12px;
  white-space: nowrap;
`;

const Cursor = styled.svg`
  position: absolute;
  left: 1010px;
  top: 576px;
`;
